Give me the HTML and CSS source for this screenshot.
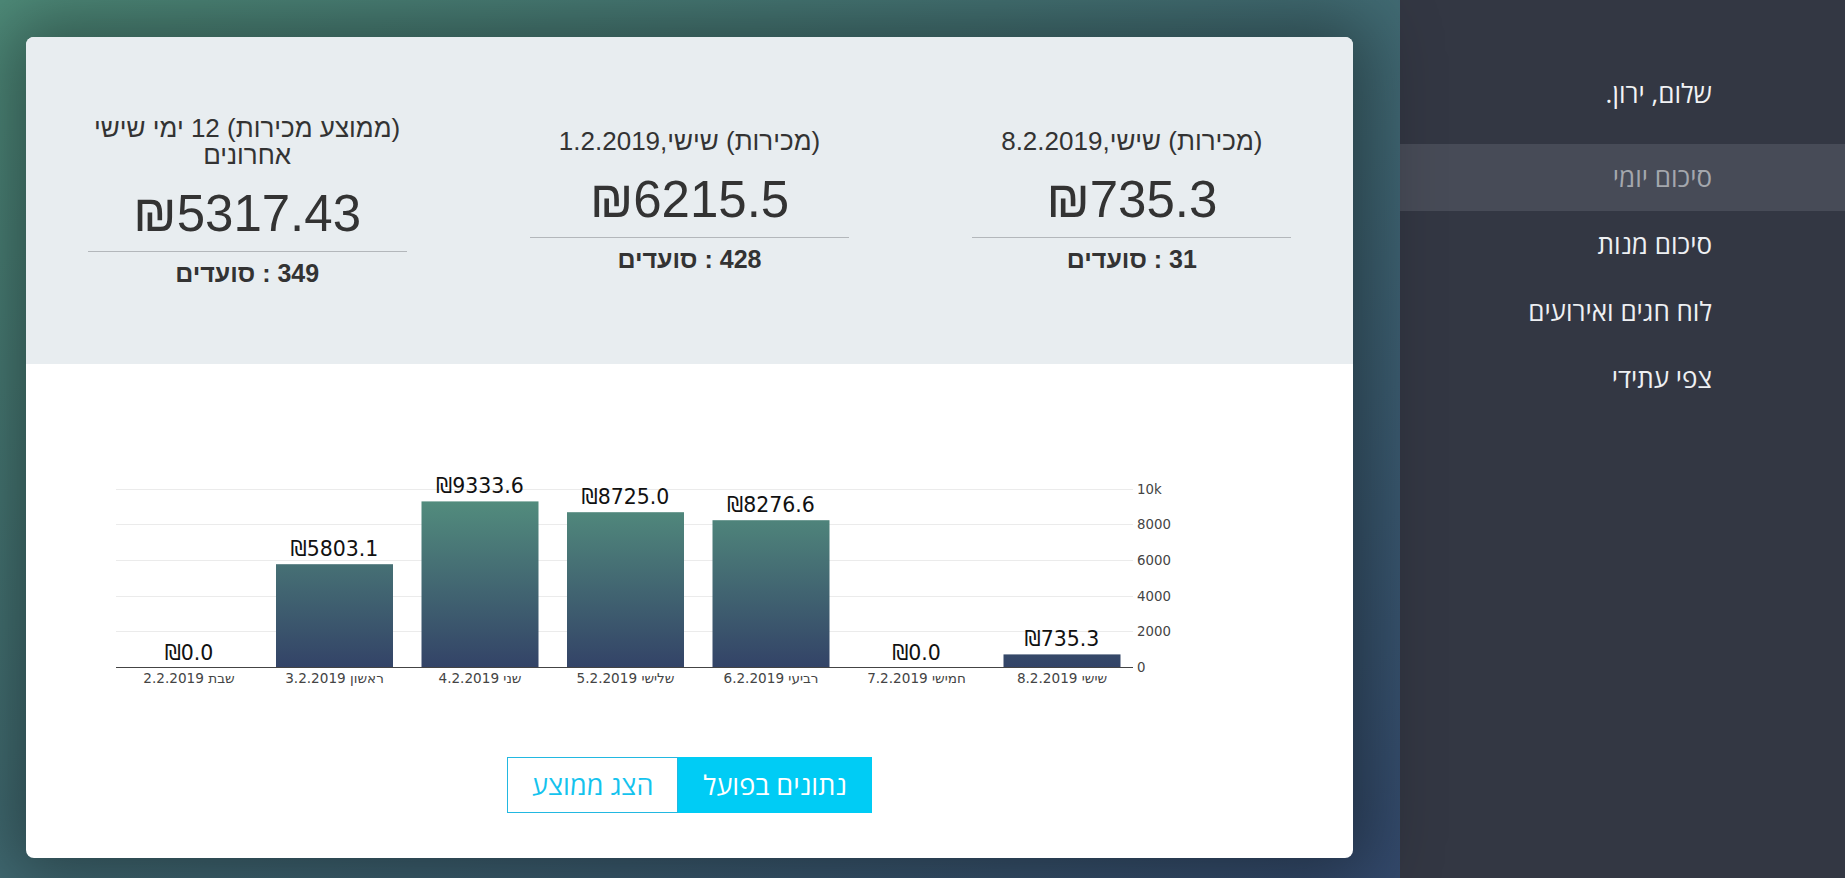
FILE: index.html
```html
<!DOCTYPE html>
<html lang="he" dir="rtl">
<head>
<meta charset="utf-8">
<title>סיכום יומי</title>
<link rel="stylesheet" href="styles.css">
</head>
<body>
<div class="app">
  <aside class="sidebar">
    <div class="greeting">שלום, ירון.</div>
    <nav class="menu">
      <a class="item active">סיכום יומי</a>
      <a class="item">סיכום מנות</a>
      <a class="item">לוח חגים ואירועים</a>
      <a class="item">צפי עתידי</a>
    </nav>
  </aside>
  <main class="main">
    <div class="card">
      <section class="summary">
        <div class="stat">
          <div class="stat-title">(מכירות) שישי,8.2.2019</div>
          <div class="stat-amount">₪735.3</div>
          <div class="stat-divider"></div>
          <div class="stat-diners">31 : סועדים</div>
        </div>
        <div class="stat">
          <div class="stat-title">(מכירות) שישי,1.2.2019</div>
          <div class="stat-amount">₪6215.5</div>
          <div class="stat-divider"></div>
          <div class="stat-diners">428 : סועדים</div>
        </div>
        <div class="stat">
          <div class="stat-title">(ממוצע מכירות) 12 ימי שישי אחרונים</div>
          <div class="stat-amount">₪5317.43</div>
          <div class="stat-divider"></div>
          <div class="stat-diners">349 : סועדים</div>
        </div>
      </section>
      <section class="chart-area">
        <svg class="chart" width="1327" height="370" viewBox="0 0 1327 370" xmlns="http://www.w3.org/2000/svg">
          <defs>
            <linearGradient id="barGrad" gradientUnits="userSpaceOnUse" x1="0" y1="137" x2="0" y2="303.5">
              <stop offset="0" stop-color="#528c7d"/>
              <stop offset="1" stop-color="#334367"/>
            </linearGradient>
          </defs>
          <g class="grid">
            <line x1="90" x2="1107" y1="125.5" y2="125.5"/>
            <line x1="90" x2="1107" y1="160.5" y2="160.5"/>
            <line x1="90" x2="1107" y1="196.5" y2="196.5"/>
            <line x1="90" x2="1107" y1="232.5" y2="232.5"/>
            <line x1="90" x2="1107" y1="267.5" y2="267.5"/>
          </g>
          <g class="bars">
            <rect x="250" y="200.2" width="117" height="103.3"/>
            <rect x="395.5" y="137.4" width="117" height="166.1"/>
            <rect x="541" y="148.2" width="117" height="155.3"/>
            <rect x="686.5" y="156.2" width="117" height="147.3"/>
            <rect x="977.5" y="290.4" width="117" height="13.1"/>
          </g>
          <line class="axis" x1="90" x2="1107" y1="303.5" y2="303.5"/>
          <g class="values">
            <text x="163" y="295.5">₪0.0</text>
            <text x="308.5" y="192.2">₪5803.1</text>
            <text x="454" y="129.4">₪9333.6</text>
            <text x="599.5" y="140.2">₪8725.0</text>
            <text x="745" y="148.2">₪8276.6</text>
            <text x="890.5" y="295.5">₪0.0</text>
            <text x="1036" y="282.4">₪735.3</text>
          </g>
          <g class="xlabels">
            <text x="163" y="318.5">שבת 2.2.2019</text>
            <text x="308.5" y="318.5">ראשון 3.2.2019</text>
            <text x="454" y="318.5">שני 4.2.2019</text>
            <text x="599.5" y="318.5">שלישי 5.2.2019</text>
            <text x="745" y="318.5">רביעי 6.2.2019</text>
            <text x="890.5" y="318.5">חמישי 7.2.2019</text>
            <text x="1036" y="318.5">שישי 8.2.2019</text>
          </g>
          <g class="ylabels">
            <text x="1111" y="130">10k</text>
            <text x="1111" y="165.3">8000</text>
            <text x="1111" y="201">6000</text>
            <text x="1111" y="236.7">4000</text>
            <text x="1111" y="272.3">2000</text>
            <text x="1111" y="308">0</text>
          </g>
        </svg>
        <div class="toggle">
          <button class="btn active">נתונים בפועל</button>
          <button class="btn">הצג ממוצע</button>
        </div>
      </section>
    </div>
  </main>
</div>
</body>
</html>
```

FILE: styles.css
```css
html, body {
  margin: 0;
  padding: 0;
}

body {
  width: 1845px;
  height: 878px;
  overflow: hidden;
  font-family: "Open Sans", "Liberation Sans", sans-serif;
}

.app {
  display: flex;
  height: 878px;
}

/* Sidebar */
.sidebar {
  flex: none;
  width: 445px;
  box-sizing: border-box;
  padding-top: 60px;
  background: #333743;
  font-family: "Open Sans", "Liberation Sans", sans-serif;
  font-size: 26px;
}

.greeting {
  height: 67px;
  line-height: 67px;
  padding-right: 133px;
  margin-bottom: 17px;
  color: #f2f3f5;
}

.menu {
  display: flex;
  flex-direction: column;
}

.item {
  display: block;
  height: 67px;
  line-height: 67px;
  padding-right: 133px;
  color: #eef0f3;
  text-decoration: none;
}

.item.active {
  background: #474b57;
  color: #a4a7ad;
}

/* Main */
.main {
  flex: 1;
  box-sizing: border-box;
  padding: 37px 47px 20px 26px;
  background: linear-gradient(to bottom right, #4f8c7a, #33496c);
}

.card {
  height: 821px;
  background: #ffffff;
  border-radius: 8px;
  overflow: hidden;
  box-shadow: 0 0 70px 18px rgba(0, 0, 0, 0.38);
  display: flex;
  flex-direction: column;
}

/* Summary */
.summary {
  flex: none;
  height: 327px;
  background: #e8edf0;
  display: grid;
  grid-template-columns: repeat(3, 1fr);
  align-items: center;
  justify-items: center;
  font-family: "Liberation Sans", Arial, sans-serif;
  color: #333333;
}

.stat {
  width: 319px;
  display: flex;
  flex-direction: column;
  align-items: center;
  text-align: center;
}

.stat-title {
  font-size: 26px;
  line-height: 27px;
}

.stat-amount {
  margin-top: 16px;
  font-size: 51px;
  line-height: 58px;
}

.stat-divider {
  width: 319px;
  margin-top: 8px;
  border-top: 1px solid #b3b7bb;
}

.stat-diners {
  margin-top: 8px;
  font-size: 25px;
  line-height: 27px;
  font-weight: bold;
}

/* Chart */
.chart-area {
  flex: 1;
  display: flex;
  flex-direction: column;
  align-items: center;
}

.chart {
  display: block;
  direction: ltr;
  font-family: "DejaVu Sans", Verdana, sans-serif;
}

.grid line {
  stroke: #ebebeb;
  stroke-width: 1;
}

.axis {
  stroke: #444444;
  stroke-width: 1;
}

.bars rect {
  fill: url(#barGrad);
}

.values text {
  font-size: 20.5px;
  fill: #111111;
  text-anchor: middle;
}

.xlabels text {
  font-size: 13.6px;
  fill: #444444;
  text-anchor: middle;
}

.ylabels text {
  font-size: 13.3px;
  fill: #444444;
  text-anchor: start;
}

/* Toggle buttons */
.toggle {
  margin-top: 23px;
  display: flex;
}

.btn {
  height: 56px;
  margin: 0;
  padding: 0 24px;
  border: 1px solid #22b8e1;
  background: #ffffff;
  color: #14c3ee;
  font-family: "Open Sans", "Liberation Sans", sans-serif;
  font-size: 27px;
  line-height: 54px;
  cursor: pointer;
}

.btn.active {
  background: #00ccf5;
  border-color: #00ccf5;
  color: #ffffff;
}
```
